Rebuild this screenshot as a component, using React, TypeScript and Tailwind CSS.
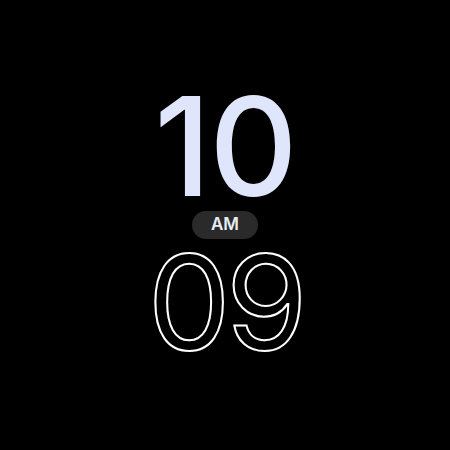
import React from "react";

export default function App() {
  return (
    <div className="w-[450px] h-[450px] bg-black flex flex-col items-center" style={{ fontFamily: "Inter, Roboto, sans-serif" }}>
      <div className="mt-[96px] text-[137px] leading-[100px] font-medium text-[#dfe5fa] tracking-[-2px]">10</div>
      <div className="mt-[15px] h-[28px] w-[66px] rounded-full bg-[#2a2a2a] text-[#e8ecf8] text-[17px] font-semibold flex items-center justify-center">AM</div>
      <div
        className="mt-[13px] text-[132px] leading-[100px] font-normal text-transparent tracking-[-5px]"
        style={{ WebkitTextStroke: "2px #ffffff" }}
      >
        09
      </div>
    </div>
  );
}
